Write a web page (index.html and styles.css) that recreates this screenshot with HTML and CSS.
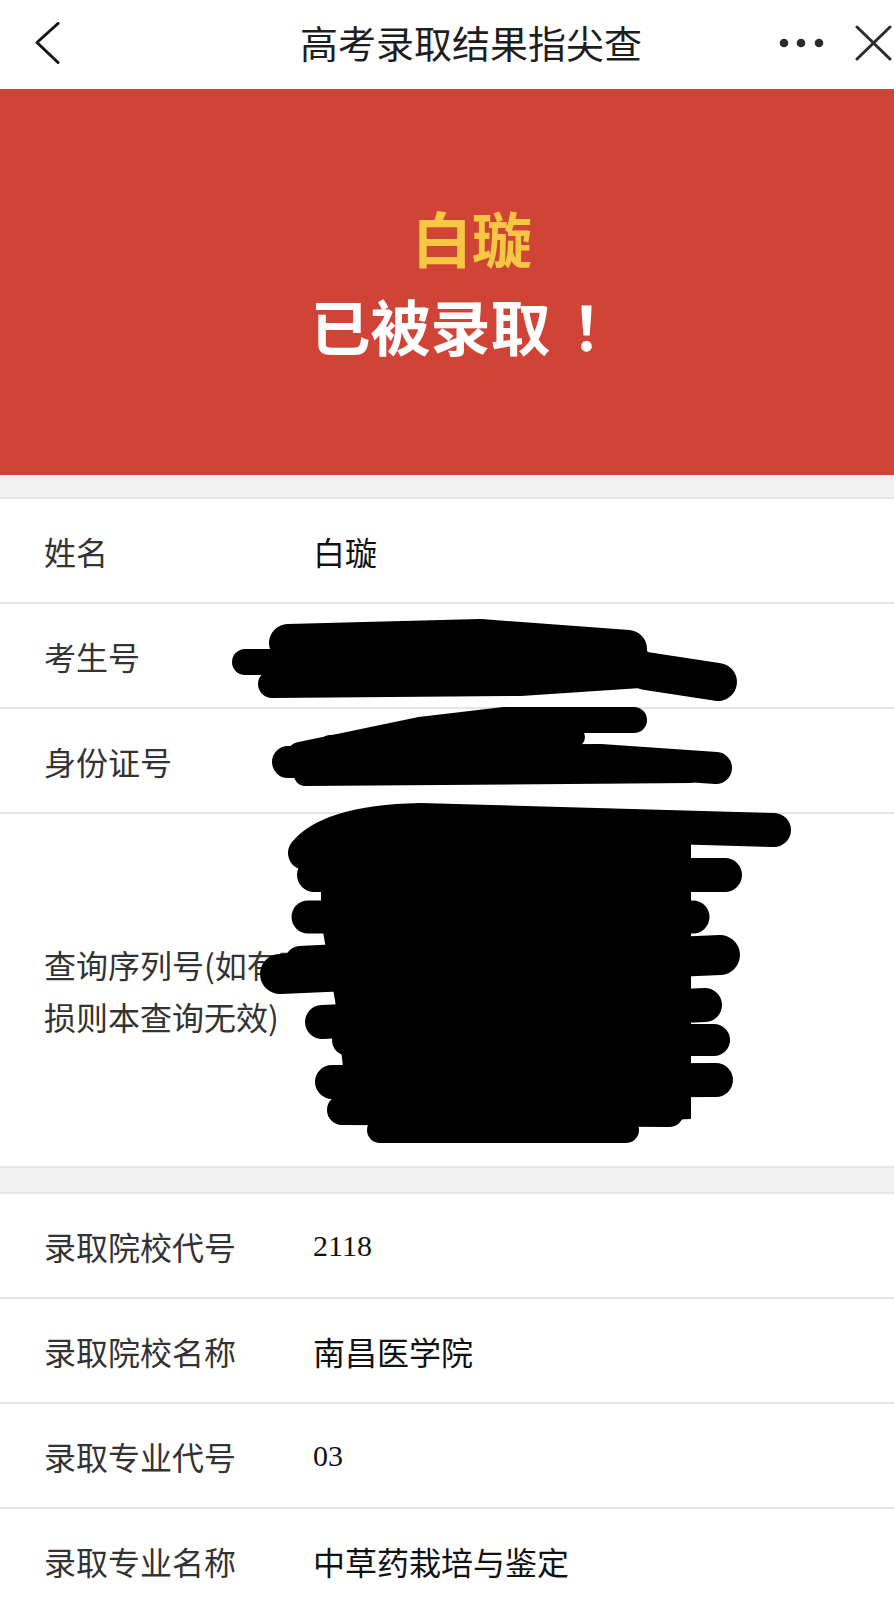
FILE: index.html
```html
<!DOCTYPE html>
<html lang="zh-CN">
<head>
    <meta charset="UTF-8">
    <meta name="viewport" content="width=device-width, initial-scale=1.0">
    <title>高考录取结果指尖查</title>
    <link rel="stylesheet" href="styles.css">
</head>
<body>
    <header class="topbar">
        <a class="nav-back" href="#">
            <svg width="30" height="46" viewBox="0 0 30 46"><polyline points="25,1.5 4,20.5 25,40.5" fill="none" stroke="#151515" stroke-width="3" stroke-linecap="round" stroke-linejoin="round"/></svg>
        </a>
        <h1 class="nav-title">高考录取结果指尖查</h1>
        <div class="nav-actions">
            <svg class="nav-more" width="52" height="12" viewBox="0 0 52 12"><circle cx="8" cy="6" r="4.3" fill="#2b2b2b"/><circle cx="25" cy="6" r="4.3" fill="#2b2b2b"/><circle cx="43" cy="6" r="4.3" fill="#2b2b2b"/></svg>
            <svg class="nav-close" width="41" height="40" viewBox="0 0 41 40"><path d="M4 2 L37 34 M37 2 L4 34" stroke="#2b2b2b" stroke-width="3" stroke-linecap="round"/></svg>
        </div>
    </header>

    <div class="banner">
        <p class="banner-name">白璇</p>
        <p class="banner-msg">已被录取<span class="bang">！</span></p>
    </div>

    <div class="gap"></div>

    <section class="info">
        <div class="row"><span class="label">姓名</span><span class="value">白璇</span></div>
        <div class="row"><span class="label">考生号</span><span class="value"></span></div>
        <div class="row"><span class="label">身份证号</span><span class="value"></span></div>
        <div class="row row-tall"><span class="label label-wrap">查询序列号(如有破损则本查询无效)</span><span class="value"></span></div>

        <!-- 涂抹遮挡 -->
        <svg class="redact" viewBox="0 499 894 669" preserveAspectRatio="none">
            <g fill="none" stroke="#000" stroke-linecap="round" stroke-linejoin="round">
                <polyline points="288,643 480,638 628,649" stroke-width="38"/>
                <polyline points="245,662 450,662 640,662" stroke-width="26"/>
                <polyline points="272,684 520,682 640,674 722,684" stroke-width="28"/>
                <polyline points="646,671 718,682" stroke-width="38"/>

                <polyline points="300,755 420,730 505,720 634,720" stroke-width="26"/>
                <polyline points="330,745 575,737" stroke-width="20"/>
                <polyline points="288,762 600,760 716,768" stroke-width="32"/>
                <polyline points="305,775 690,772" stroke-width="22"/>

                <polygon points="322,835 690,835 690,1118 400,1132 348,1100 336,1000 322,920" fill="#000" stroke-width="2"/>
                <path d="M305 853 Q330 822 420 820 L774 830" stroke-width="34"/>
                <polyline points="314,875 725,875" stroke-width="34"/>
                <polyline points="308,917 693,917" stroke-width="33"/>
                <polyline points="300,961 420,955" stroke-width="30"/>
                <polyline points="280,974 720,955" stroke-width="40"/>
                <polyline points="322,1022 705,1005" stroke-width="34"/>
                <polyline points="348,1040 714,1040" stroke-width="32"/>
                <polyline points="332,1082 716,1080" stroke-width="34"/>
                <polyline points="342,1110 669,1112" stroke-width="30"/>
                <polyline points="380,1130 626,1130" stroke-width="26"/>
            </g>
        </svg>
    </section>

    <div class="gap gap-lower"></div>

    <section class="info">
        <div class="row"><span class="label">录取院校代号</span><span class="value num">2118</span></div>
        <div class="row"><span class="label">录取院校名称</span><span class="value">南昌医学院</span></div>
        <div class="row"><span class="label">录取专业代号</span><span class="value num">03</span></div>
        <div class="row"><span class="label">录取专业名称</span><span class="value">中草药栽培与鉴定</span></div>
    </section>
</body>
</html>
```

FILE: styles.css
```css
/* Основные стили */
body {
    margin: 0;
    padding: 0;
    background-color: #fff;
    color: #222;
    font-family: "Noto Sans CJK SC", "Noto Sans", sans-serif;
}

/* Верхняя панель */
.topbar {
    display: flex;
    align-items: center;
    height: 89px;
    background-color: #fff;
}
.nav-back {
    display: flex;
    align-items: center;
    width: 94px;
    height: 89px;
    padding-left: 33px;
    box-sizing: border-box;
}
.nav-title {
    flex: 1;
    align-self: flex-start;
    margin: 0;
    padding-left: 72px;
    font-size: 38px;
    font-weight: 400;
    line-height: 84px;
    text-align: center;
    color: #1e1e1e;
    white-space: nowrap;
}
.nav-actions {
    display: flex;
    align-items: center;
    width: 118px;
}
.nav-more {
    margin-right: 25px;
    margin-top: -3px;
}

/* Баннер */
.banner {
    display: flex;
    flex-direction: column;
    justify-content: center;
    align-items: center;
    height: 386px;
    padding-bottom: 2px;
    box-sizing: border-box;
    background-color: #cf4436;
}
.banner p {
    margin: 0;
    font-size: 60px;
    font-weight: 700;
    line-height: 88px;
}
.banner-name {
    color: #f7c744;
    padding-left: 50px;
}
.banner-msg {
    color: #fff;
    padding-left: 48px;
}
.bang {
    margin-left: 21px;
}

.gap {
    height: 22px;
    background-color: #f2f2f2;
}
.gap-lower {
    height: 24px;
}

/* Таблица данных */
.info {
    position: relative;
    border-top: 2px solid #e4e4e4;
    background-color: #fff;
}
.row {
    display: flex;
    align-items: center;
    height: 103px;
    padding-left: 44px;
    border-bottom: 2px solid #e4e4e4;
}
.row-tall {
    height: 352px;
}
.label {
    flex: 0 0 269px;
    font-size: 32px;
    color: #333;
}
.label-wrap {
    line-height: 52px;
}
.value {
    flex: 1;
    font-size: 32px;
    color: #111;
}
.value.num {
    font-family: "Liberation Serif", "Noto Sans CJK SC", serif;
    font-size: 30px;
}
.redact {
    position: absolute;
    left: 0;
    top: 0;
    width: 100%;
    height: 100%;
    overflow: visible;
    pointer-events: none;
}
```
